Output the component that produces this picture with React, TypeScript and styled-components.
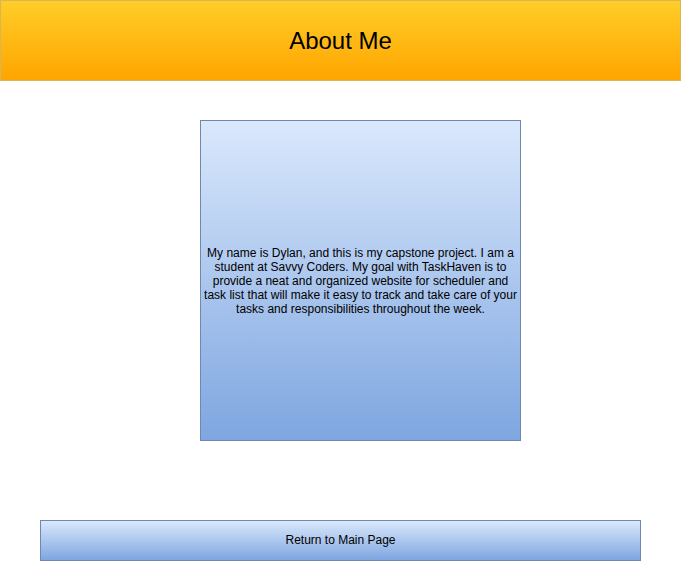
import React from 'react';
import styled, { createGlobalStyle } from 'styled-components';

const GlobalStyle = createGlobalStyle`
  html, body {
    margin: 0;
    padding: 0;
    background: #ffffff;
    font-family: "Liberation Sans", Arial, Helvetica, sans-serif;
    color: #000000;
  }
`;

const Page = styled.div`
  width: 681px;
  height: 561px;
  display: flex;
  flex-direction: column;
`;

const Header = styled.header`
  box-sizing: border-box;
  width: 681px;
  height: 81px;
  border: 1px solid #d6b656;
  background: linear-gradient(to bottom, #ffcd28, #ffa500);
  display: flex;
  align-items: center;
  justify-content: center;
`;

const Title = styled.h1`
  margin: 0;
  font-size: 24px;
  font-weight: normal;
  color: #000000;
`;

const AboutCard = styled.section`
  box-sizing: border-box;
  width: 321px;
  height: 321px;
  margin: 39px 0 0 200px;
  padding: 0 2px;
  border: 1px solid #7088b0;
  background: linear-gradient(to bottom, #dae8fc, #7ea6e0);
  display: flex;
  align-items: center;
  justify-content: center;
`;

const AboutText = styled.p`
  margin: 0;
  font-size: 12px;
  line-height: 14px;
  text-align: center;
`;

const ReturnButton = styled.button`
  box-sizing: border-box;
  width: 601px;
  height: 41px;
  margin: 79px 0 0 40px;
  padding: 0 0 2px;
  border: 1px solid #7088b0;
  border-radius: 0;
  background: linear-gradient(to bottom, #dae8fc, #7ea6e0);
  font-family: "Liberation Sans", Arial, Helvetica, sans-serif;
  font-size: 12px;
  color: #000000;
  cursor: pointer;
`;

const App: React.FC = () => {
  return (
    <Page>
      <GlobalStyle />
      <Header>
        <Title>About Me</Title>
      </Header>
      <AboutCard>
        <AboutText>
          My name is Dylan, and this is my capstone project. I am a student at Savvy Coders. My goal
          with TaskHaven is to provide a neat and organized website for scheduler and task list that
          will make it easy to track and take care of your tasks and responsibilities throughout the
          week.
        </AboutText>
      </AboutCard>
      <ReturnButton>Return to Main Page</ReturnButton>
    </Page>
  );
};

export default App;
